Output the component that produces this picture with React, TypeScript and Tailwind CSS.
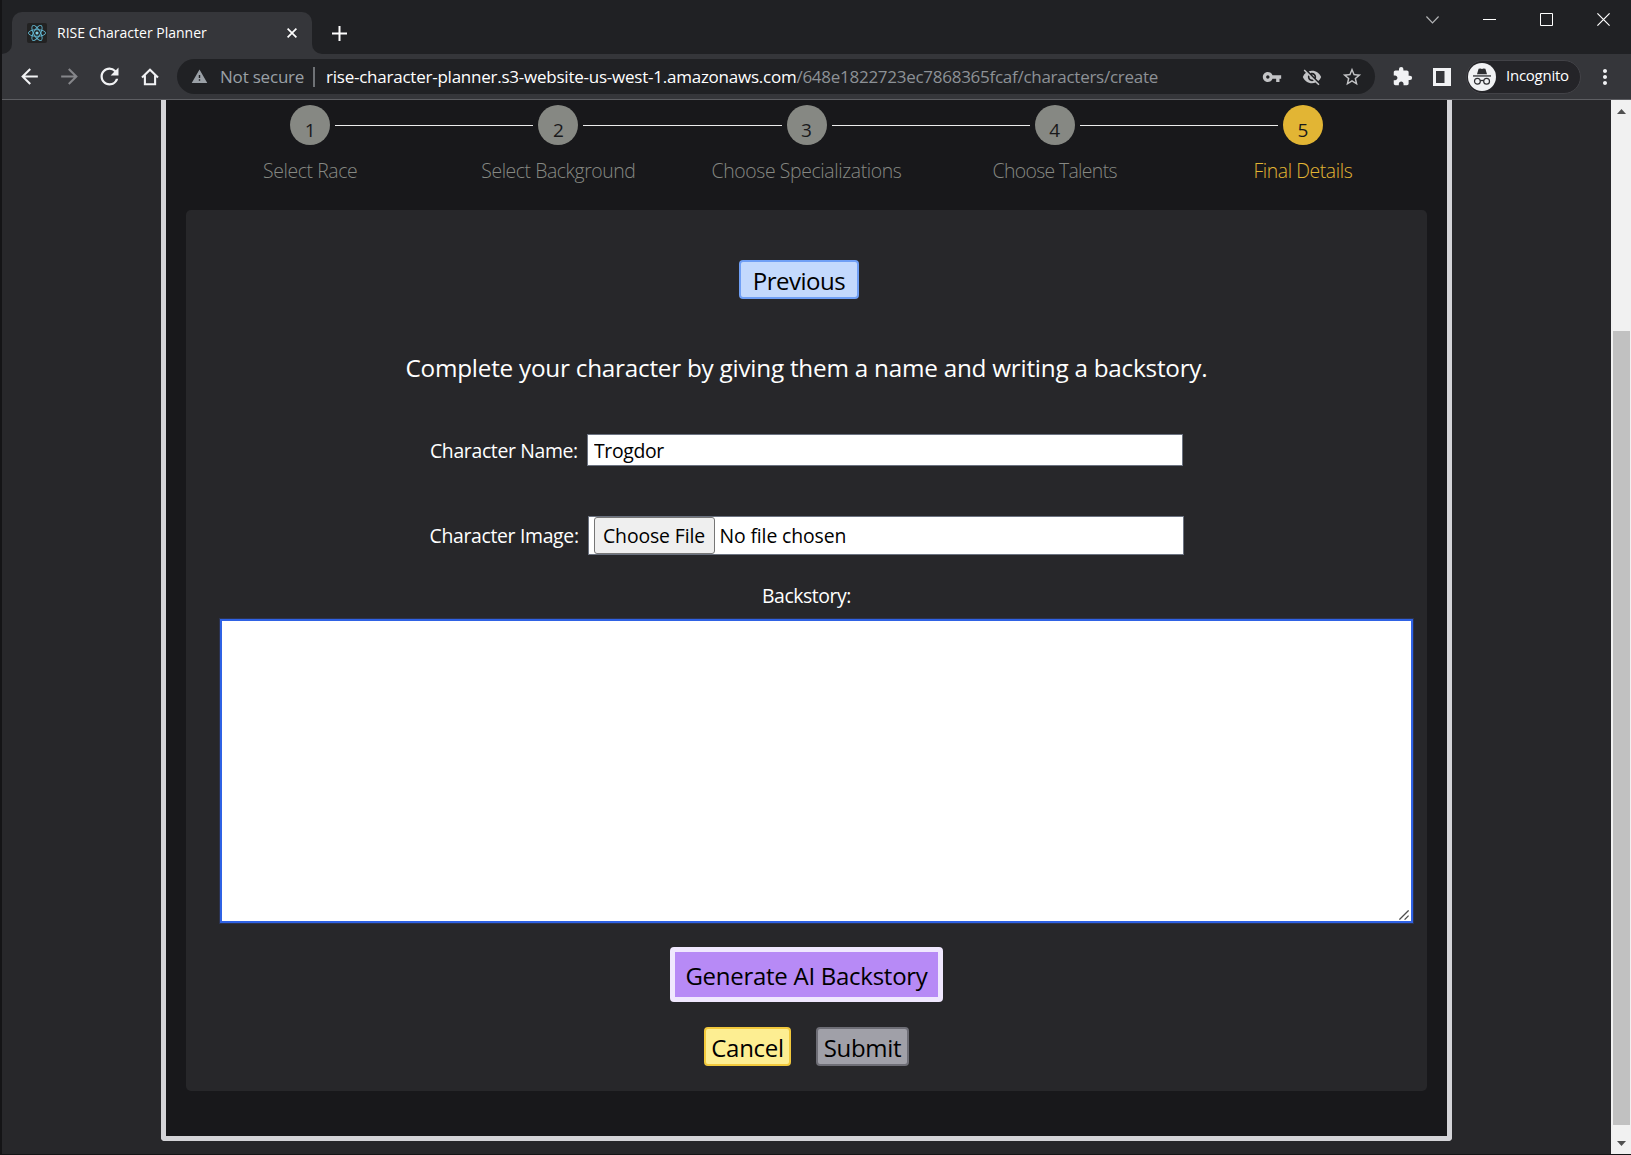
import type { ReactNode } from "react";
import {
  MdArrowBack,
  MdArrowForward,
  MdExtension,
  MdMoreVert,
  MdRefresh,
  MdStarBorder,
  MdVisibilityOff,
  MdVpnKey,
  MdWarning,
} from "react-icons/md";

function ReactLogo() {
  return (
    <span className="flex size-5 items-center justify-center rounded-[2px] bg-[#222222]">
      <svg viewBox="-12 -12 24 24" className="size-5" fill="none" stroke="#61b5cf" strokeWidth="1.1">
        <circle r="1.9" fill="#7fd0e6" stroke="none" />
        <ellipse rx="10.3" ry="4" />
        <ellipse rx="10.3" ry="4" transform="rotate(60)" />
        <ellipse rx="10.3" ry="4" transform="rotate(120)" />
      </svg>
    </span>
  );
}

function HomeIcon() {
  return (
    <svg viewBox="0 0 18 18" className="size-[18px]" fill="none" stroke="currentColor" strokeWidth="2.1">
      <path d="M1 9.6 9 1.8l8 7.8M3.9 7.6v8.6h10.2V7.6" />
    </svg>
  );
}

function SidePanelIcon() {
  return (
    <svg viewBox="0 0 18 18" className="size-[18px]" fill="#f1f2f4">
      <path fillRule="evenodd" d="M0 0h18v18H0zM3 3v12h8.500V3z" />
    </svg>
  );
}

function IncognitoIcon() {
  return (
    <span className="flex size-7 items-center justify-center rounded-full bg-[#f1f2f4]">
      <svg viewBox="0 0 20 20" className="size-5">
        <path d="M6.600 1.800 8.400 1.400 10 1.900l1.600-.5 1.800.4 1.600 5.500H5z" fill="#2d2e31" />
        <path d="M1 8.300h18v1.300H1z" fill="#2d2e31" />
        <g fill="none" stroke="#2d2e31" strokeWidth="1.200">
          <circle cx="5.400" cy="14.300" r="2.900" />
          <circle cx="14.600" cy="14.300" r="2.900" />
          <path d="M8.200 13.900q1.800-1.200 3.600 0" />
        </g>
      </svg>
    </span>
  );
}

function Slot({ children, className = "" }: { children: ReactNode; className?: string }) {
  return <span className={"flex w-10 shrink-0 items-center justify-center " + className}>{children}</span>;
}

function TabStrip() {
  return (
    <div className="flex h-[54px] shrink-0 items-end bg-[#202124] text-white">
      <div className="size-[10px] bg-[#35363a]">
        <div className="size-full rounded-br-[10px] bg-[#202124]" />
      </div>
      <div className="flex h-[42px] w-[300px] items-center rounded-t-[10px] bg-[#35363a] pl-[15px] text-[14px]">
        <ReactLogo />
        <span className="ml-[10px] w-[230px] whitespace-nowrap pb-px">RISE Character Planner</span>
        <svg viewBox="0 0 10 10" className="size-[10px] shrink-0" stroke="#fff" strokeWidth="1.700">
          <path d="M.6.6l8.800 8.800M9.400.6.600 9.400" />
        </svg>
      </div>
      <div className="size-[10px] bg-[#35363a]">
        <div className="size-full rounded-bl-[10px] bg-[#202124]" />
      </div>
      <div className="flex h-[42px] flex-1 items-center pl-[10px]">
        <svg viewBox="0 0 15 15" className="size-[15px]" stroke="#fff" strokeWidth="2">
          <path d="M7.500 0v15M0 7.500h15" />
        </svg>
      </div>
      <div className="flex h-full items-start gap-11 pt-[13px] pr-[21px]">
        <svg viewBox="0 0 13 13" className="size-[13px]" fill="none" stroke="#b4b5b7" strokeWidth="1.200">
          <path d="M.4 3.500 6.500 9.800l6.100-6.300" />
        </svg>
        <svg viewBox="0 0 13 13" className="size-[13px]" stroke="#fff">
          <path d="M0 6.500h13" />
        </svg>
        <svg viewBox="0 0 13 13" className="size-[13px]" fill="none" stroke="#fff">
          <path d="M.5.5h12v12H.5z" />
        </svg>
        <svg viewBox="0 0 13 13" className="size-[13px]" stroke="#fff" strokeWidth="1.200">
          <path d="M.4.4l12.200 12.200M12.600.4.400 12.600" />
        </svg>
      </div>
    </div>
  );
}

function Toolbar() {
  return (
    <div className="flex h-[46px] shrink-0 items-center border-b border-[#5d5e62] bg-[#35363a] pl-[7px] text-[#f1f2f4]">
      <Slot><MdArrowBack size={25} /></Slot>
      <Slot className="text-[#85868a]"><MdArrowForward size={25} /></Slot>
      <Slot><MdRefresh size={27} /></Slot>
      <Slot className="pl-px"><HomeIcon /></Slot>
      <div className="ml-2 flex h-[35px] w-[1198px] shrink-0 items-center rounded-full bg-[#202124] pr-[3px] pl-[14px] text-[17px] text-[#9aa0a6]">
        <MdWarning size={17} />
        <span className="ml-3 w-[93px] tracking-[-0.2px] whitespace-nowrap">Not secure</span>
        <span className="h-5 w-[2px] bg-[#6f7276]" />
        <span className="ml-[11px] flex-1 whitespace-nowrap">
          <span className="tracking-[-0.235px] text-white">rise-character-planner.s3-website-us-west-1.amazonaws.com</span>
          <span className="tracking-[-0.27px] text-[#8d9196]">/648e1822723ec7868365fcaf/characters/create</span>
        </span>
        <span className="flex text-[#c3c4c6]">
          <Slot><MdVpnKey size={20} /></Slot>
          <Slot><MdVisibilityOff size={20} /></Slot>
          <Slot><MdStarBorder size={22} /></Slot>
        </span>
      </div>
      <Slot className="ml-[7px]"><MdExtension size={21} /></Slot>
      <Slot><SidePanelIcon /></Slot>
      <div className="ml-1 flex h-[34px] w-[115px] shrink-0 items-center rounded-full border border-[#424247] bg-[#242428] pl-px">
        <IncognitoIcon />
        <span className="ml-[10px] pb-[2px] text-[15px] tracking-[-0.25px] whitespace-nowrap text-white">Incognito</span>
      </div>
      <Slot className="ml-1"><MdMoreVert size={24} /></Slot>
    </div>
  );
}

const steps = [
  { label: "Select Race", tracking: "tracking-[-0.4px]" },
  { label: "Select Background", tracking: "tracking-[-0.44px]" },
  { label: "Choose Specializations", tracking: "tracking-[-0.38px]" },
  { label: "Choose Talents", tracking: "tracking-[-0.64px]" },
  { label: "Final Details", tracking: "tracking-[-0.42px]" },
];

function Stepper() {
  return (
    <ol className="flex h-[110px] px-5 pt-[5px] font-light">
      {steps.map(({ label, tracking }, i) => {
        const current = i === steps.length - 1;
        return (
          <li key={label} className="flex flex-1 flex-col items-center">
            <div className="flex w-full items-center gap-[5px]">
              <span className={"h-px flex-1 " + (i === 0 ? "" : "bg-[#ececec]")} />
              <span
                className={
                  "flex size-10 items-center justify-center rounded-full pt-[10px] text-[19px] leading-none font-normal text-[#19191b] " +
                  (current ? "bg-[#e2b534]" : "bg-[#868883]")
                }
              >
                {i + 1}
              </span>
              <span className={"h-px flex-1 " + (current ? "" : "bg-[#ececec]")} />
            </div>
            <span
              className={
                "mt-[11px] text-[19.4px] leading-[30px] whitespace-nowrap " +
                tracking +
                (current ? " text-[#e2b534]" : " text-[#868883]")
              }
            >
              {label}
            </span>
          </li>
        );
      })}
    </ol>
  );
}

function DetailsForm() {
  return (
    <form className="mx-5 flex h-[881px] flex-col items-center rounded-[5px] bg-[#27272a] pt-[50px] text-[19.4px] text-white">
      <button
        type="button"
        className="mr-[15px] h-[39px] w-[120px] shrink-0 rounded-[4px] border-2 border-[#6f9ff5] bg-[#c3d9fd] pt-px text-[24px] leading-[36px] tracking-[-0.5px] text-black"
      >
        Previous
      </button>
      <p className="mt-[50px] text-[24.3px] leading-[38px] tracking-[-0.243px] whitespace-nowrap">
        Complete your character by giving them a name and writing a backstory.
      </p>
      <label className="mt-[47px] flex items-center">
        <span className="w-[157px] pt-[2px] tracking-[-0.34px] whitespace-nowrap">Character Name:</span>
        <input
          readOnly
          value="Trogdor"
          className="h-8 w-[596px] border border-[#6b7280] bg-white px-[6px] pt-px tracking-[-0.35px] text-black"
        />
      </label>
      <div className="mt-[50px] flex items-center">
        <span className="w-[158px] pt-px tracking-[-0.32px] whitespace-nowrap">Character Image:</span>
        <div className="flex h-[39px] w-[596px] items-center border border-[#6b7280] bg-white pl-[5px] text-black">
          <button
            type="button"
            className="h-[37px] w-[121px] rounded-[3px] border border-[#767676] bg-[#efefef] leading-[35px] tracking-[-0.12px] whitespace-nowrap"
          >
            Choose File
          </button>
          <span className="ml-[5px] tracking-[-0.12px] whitespace-nowrap">No file chosen</span>
        </div>
      </div>
      <span className="mt-[26px] leading-[30px] tracking-[-0.44px]">Backstory:</span>
      <div className="relative mt-2 ml-5 h-[304px] w-[1193px] shrink-0">
        <textarea
          readOnly
          className="block size-full resize-none border-2 border-[#2f62e4] bg-white text-black shadow-[0_0_0_1px_#2b3350] outline-none"
        />
        <svg viewBox="0 0 10 10" className="absolute right-1 bottom-[3px] size-[10px]" stroke="#4c4c4c" strokeWidth="1.300">
          <path d="M.4 9.600 9.600.4M5.600 9.600l4-4" />
        </svg>
      </div>
      <button
        type="button"
        className="mt-6 h-[55px] w-[273px] shrink-0 rounded-[4px] border-[5px] border-[#f0e8fe] bg-[#b78af6] pt-[2px] text-[24px] leading-[43px] tracking-[-0.27px] whitespace-nowrap text-black"
      >
        Generate AI Backstory
      </button>
      <div className="mt-[25px] flex gap-[25px] text-[24px] leading-[36px] tracking-[-0.3px] text-black">
        <button type="button" className="h-[39px] w-[87px] rounded-[4px] border-2 border-[#f2c93c] bg-[#fdee92] pt-px">
          Cancel
        </button>
        <button type="button" className="h-[39px] w-[93px] rounded-[4px] border-2 border-[#6e6e76] bg-[#a0a0a8] pt-px">
          Submit
        </button>
      </div>
    </form>
  );
}

function Scrollbar() {
  return (
    <div className="flex w-5 shrink-0 flex-col items-center bg-[#f1f1f1] py-[9px] pl-px">
      <svg viewBox="0 0 9 5" className="h-[5px] w-[9px]" fill="#505050">
        <path d="M0 5 4.500 0 9 5z" />
      </svg>
      <div className="mt-[217px] h-[794px] w-[17px] bg-[#c1c1c1]" />
      <svg viewBox="0 0 9 5" className="mt-4 h-[5px] w-[9px]" fill="#505050">
        <path d="M0 0h9L4.500 5z" />
      </svg>
    </div>
  );
}

export default function App() {
  return (
    <div className="flex h-[1155px] w-[1631px] flex-col overflow-hidden border-b border-l-2 border-[#141416] bg-[#27272a] font-['Open_Sans','Noto_Sans',sans-serif]">
      <TabStrip />
      <Toolbar />
      <div className="flex flex-1 justify-between">
        <main className="ml-[159px] h-[1041px] w-[1291px] rounded-b-[4px] border-x-[5px] border-b-[5px] border-[#d4d4d8] bg-[#18181b]">
          <Stepper />
          <DetailsForm />
        </main>
        <Scrollbar />
      </div>
    </div>
  );
}
